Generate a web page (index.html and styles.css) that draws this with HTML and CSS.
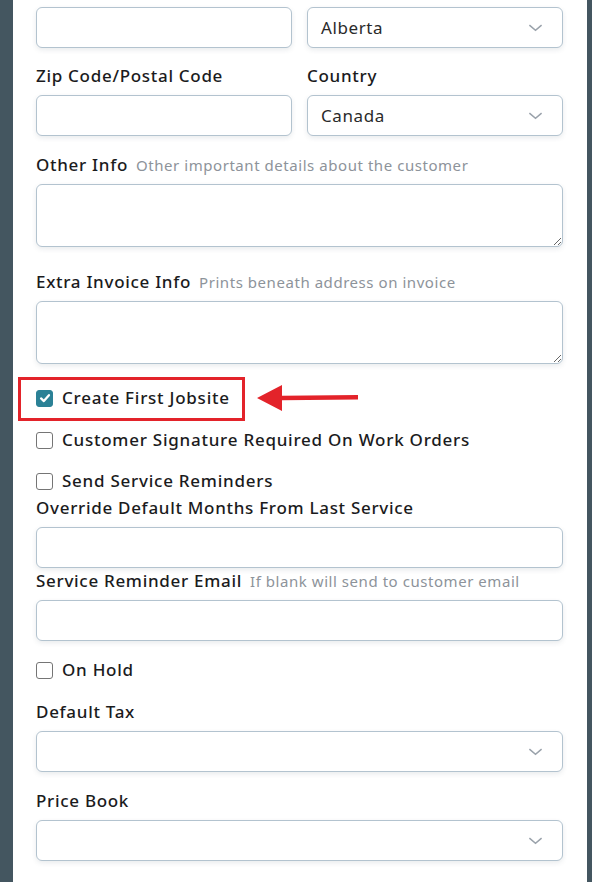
FILE: index.html
```html
<!DOCTYPE html>
<html lang="en">
<head>
<meta charset="utf-8">
<title>Customer form</title>
<link rel="stylesheet" href="styles.css">
</head>
<body>
<div class="panel">
  <div class="row row-first">
    <div class="control"></div>
    <div class="control select"><span class="value">Alberta</span><svg class="chev" viewBox="0 0 16 10"><path d="M1.5 2 L8 7.5 L14.5 2"/></svg></div>
  </div>

  <div class="row row-zip">
    <div class="field">
      <div class="label">Zip Code/Postal Code</div>
      <div class="control"></div>
    </div>
    <div class="field">
      <div class="label">Country</div>
      <div class="control select"><span class="value">Canada</span><svg class="chev" viewBox="0 0 16 10"><path d="M1.5 2 L8 7.5 L14.5 2"/></svg></div>
    </div>
  </div>

  <div class="field f-other">
    <div class="label">Other Info <span class="hint">Other important details about the customer</span></div>
    <textarea class="area"></textarea>
  </div>

  <div class="field f-extra">
    <div class="label">Extra Invoice Info <span class="hint">Prints beneath address on invoice</span></div>
    <textarea class="area"></textarea>
  </div>

  <div class="check-row c-first">
    <span class="box checked"><svg viewBox="0 0 16 16"><path d="M3.5 8.5 L6.7 11.5 L12.5 4.8"/></svg></span>
    <span class="check-text">Create First Jobsite</span>
    <span class="highlight"></span>
    <svg class="arrow" viewBox="0 0 102 28"><path d="M0 14 L25 1 L25 11.8 L101 11 L101 15.5 L25 16.2 L25 27 Z"/></svg>
  </div>

  <div class="check-row c-sig">
    <span class="box"></span>
    <span class="check-text">Customer Signature Required On Work Orders</span>
  </div>

  <div class="check-row c-remind">
    <span class="box"></span>
    <span class="check-text">Send Service Reminders</span>
  </div>

  <div class="field f-override">
    <div class="label">Override Default Months From Last Service</div>
    <div class="control"></div>
  </div>

  <div class="field f-email">
    <div class="label">Service Reminder Email <span class="hint">If blank will send to customer email</span></div>
    <div class="control"></div>
  </div>

  <div class="check-row c-hold">
    <span class="box"></span>
    <span class="check-text">On Hold</span>
  </div>

  <div class="field f-tax">
    <div class="label">Default Tax</div>
    <div class="control select"><span class="value"></span><svg class="chev" viewBox="0 0 16 10"><path d="M1.5 2 L8 7.5 L14.5 2"/></svg></div>
  </div>

  <div class="field f-book">
    <div class="label">Price Book</div>
    <div class="control select"><span class="value"></span><svg class="chev" viewBox="0 0 16 10"><path d="M1.5 2 L8 7.5 L14.5 2"/></svg></div>
  </div>
</div>
</body>
</html>
```

FILE: styles.css
```css
* { box-sizing: border-box; }

html, body {
  margin: 0;
  padding: 0;
  height: 100%;
  overflow: hidden;
}

body {
  background: #445660;
  font-family: "Noto Sans", "DejaVu Sans", sans-serif;
  color: #1b1b1d;
}

.panel {
  margin-left: 13px;
  width: 574px;
  min-height: 882px;
  background: #ffffff;
  padding: 7px 24px 0 23px;
}

.row {
  display: grid;
  grid-template-columns: 256px 256px;
  column-gap: 15px;
}

.row-first { margin-bottom: 18px; }
.row-zip { margin-bottom: 19px; }

.label {
  display: flex;
  align-items: baseline;
  height: 20px;
  font-size: 17px;
  font-weight: 500;
  letter-spacing: 0.7px;
  line-height: 20px;
  margin-bottom: 9px;
  white-space: nowrap;
}

.hint {
  font-size: 15px;
  font-weight: 400;
  line-height: 20px;
  color: #8d939a;
  letter-spacing: 0.55px;
  margin-left: 8px;
}

.control {
  display: flex;
  align-items: center;
  height: 41px;
  border: 1px solid #b3c3cf;
  border-radius: 6px;
  background: #fff;
  box-shadow: 0 2px 5px rgba(40, 60, 80, 0.10);
  padding: 0 13px;
}

.select { justify-content: space-between; }

.value {
  font-size: 17px;
  letter-spacing: 0.6px;
  color: #2a2a2a;
}

.chev {
  width: 15px;
  height: 10px;
  margin-right: 6px;
  fill: none;
  stroke: #9aa2ab;
  stroke-width: 1.6;
}

.area {
  display: block;
  width: 100%;
  height: 63px;
  border: 1px solid #b3c3cf;
  border-radius: 6px;
  box-shadow: 0 2px 5px rgba(40, 60, 80, 0.10);
  resize: vertical;
  font: inherit;
  margin: 0;
}

.f-other { margin-bottom: 25px; }
.f-extra { margin-bottom: 24px; }

.check-row {
  position: relative;
  display: flex;
  align-items: center;
  gap: 9px;
  height: 20px;
}

.check-text {
  font-size: 17px;
  font-weight: 500;
  letter-spacing: 0.75px;
  line-height: 20px;
  white-space: nowrap;
}

.box {
  flex: none;
  width: 17px;
  height: 17px;
  border: 1.5px solid #757575;
  border-radius: 3px;
  display: flex;
  align-items: center;
  justify-content: center;
}

.box.checked {
  background: #2b8196;
  border-color: #2b8196;
}

.box svg {
  width: 14px;
  height: 14px;
  fill: none;
  stroke: #fff;
  stroke-width: 2.6;
  stroke-linecap: round;
  stroke-linejoin: round;
}

.c-first { margin-bottom: 22px; }
.c-sig { margin-bottom: 21px; }
.c-remind { margin-bottom: 7px; }

.highlight {
  position: absolute;
  left: -18px;
  top: -11px;
  width: 227px;
  height: 44px;
  border: 3px solid #e3232a;
}

.arrow {
  position: absolute;
  left: 221px;
  top: -4px;
  width: 102px;
  height: 28px;
  fill: #e3232a;
}

.f-override { margin-bottom: 3px; }
.f-email { margin-bottom: 19px; }
.c-hold { margin-bottom: 22px; }
.f-tax { margin-bottom: 19px; }
```
